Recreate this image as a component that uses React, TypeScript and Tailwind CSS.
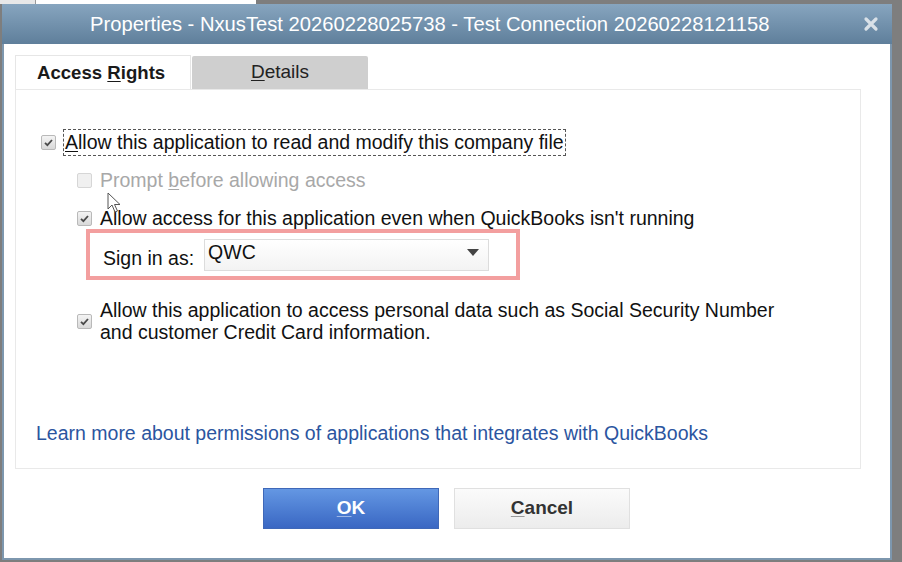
import React from "react";

const font = { fontFamily: '"Liberation Sans", Arial, sans-serif' };

function Check({ checked = true, disabled = false }: { checked?: boolean; disabled?: boolean }) {
  return (
    <span
      className={
        "inline-flex h-[15px] w-[15px] shrink-0 items-center justify-center rounded-[2px] border " +
        (disabled
          ? "border-[#d6d6d6] bg-[#f0f0f0]"
          : "border-[#b9b9b9] bg-gradient-to-b from-[#f4f4f4] to-[#d9d9d9]")
      }
    >
      {checked && (
        <svg width="11" height="11" viewBox="0 0 11 11">
          <path d="M2 5.8 L4.4 8.2 L9 3" fill="none" stroke="#4a4a4a" strokeWidth="1.8" />
        </svg>
      )}
    </span>
  );
}

export default function App() {
  return (
    <div style={font} className="relative h-[562px] w-[902px] overflow-hidden bg-[#7e7e7e]">
      {/* window behind the dialog */}
      <div className="flex h-[4px] w-[256px]">
        <div className="w-[35px] bg-[#e8e8e8]" />
        <div className="w-px bg-[#9a9a9a]" />
        <div className="flex-1 bg-white" />
      </div>

      <div className="ml-[2px] flex h-[556px] w-[890px] flex-col border-x-[2px] border-b-[2px] border-[#7d97ae] bg-white">
        {/* title bar */}
        <div className="-mx-[2px] flex h-[40px] shrink-0 items-center bg-gradient-to-b from-[#87a5bf] to-[#5f7f9b] pl-[88px] pr-[13px]">
          <span className="flex-1 text-[20.2px] text-white">
            Properties - NxusTest 20260228025738 - Test Connection 20260228121158
          </span>
          <svg width="16" height="16" viewBox="0 0 16 16">
            <path d="M3 3 L13 13 M13 3 L3 13" stroke="#d9e1e8" strokeWidth="3.2" strokeLinecap="round" />
          </svg>
        </div>

        <div className="flex flex-1 flex-col px-[11px]">
          {/* tabs */}
          <div className="mt-[11px] flex h-[34px] items-end">
            <div className="flex h-[34px] w-[176px] items-center border-x border-t border-[#e6e6e6] bg-white pl-[21px] text-[18.6px] font-bold text-[#1a1a1a]">
              Access&nbsp;<span className="underline decoration-1 underline-offset-2">R</span>ights
            </div>
            <div className="ml-[1px] flex h-[33px] w-[176px] items-center justify-center rounded-t-[2px] bg-[#cfcfcf] text-[19px] text-[#222]">
              <span className="underline decoration-1 underline-offset-2">D</span>etails
            </div>
          </div>

          {/* panel */}
          <div className="relative flex h-[380px] w-[846px] flex-col border border-[#e9e9e9] text-[19.5px] text-[#111]">
            <div className="mt-[39px] flex items-center pl-[25px]">
              <Check />
              <span className="ml-[7px] border border-dashed border-[#555] px-px leading-[25px]">
                <span className="underline decoration-1 underline-offset-2">A</span>llow this application to read and modify this company file
              </span>
            </div>

            <div className="mt-[11px] flex items-center pl-[61px] text-[#a8a8a8]">
              <Check checked={false} disabled />
              <span className="ml-[8px] leading-[26px]">
                Prompt <span className="underline decoration-1 underline-offset-2">b</span>efore allowing access
              </span>
            </div>

            <div className="mt-[12px] flex items-center pl-[61px]">
              <Check />
              <span className="ml-[8px] leading-[26px]">
                Allow access for this application even when QuickBooks isn't running
              </span>
            </div>

            <div className="-mt-[2px] ml-[70px] flex h-[51px] w-[434px] items-center border-[4px] border-[#f39f9f] bg-white pl-[13px]">
              <span className="mt-[8px]">Sign in as:</span>
              <div className="ml-[10px] flex h-[32px] w-[285px] items-center justify-between border border-[#dcdcdc] bg-gradient-to-b from-white to-[#f3f3f3] pl-[3px] pr-[9px]">
                <span className="-mt-[4px]">QWC</span>
                <svg width="12" height="7" viewBox="0 0 12 7" className="-mt-[4px]">
                  <path d="M0 0 H12 L6 7 Z" fill="#444" />
                </svg>
              </div>
            </div>

            <div className="mt-[19px] flex items-center pl-[61px]">
              <Check />
              <span className="ml-[8px] leading-[22px]">
                Allow this application to access personal data such as Social Security Number
                <br />
                and customer Credit Card information.
              </span>
            </div>

            <div className="mt-[76px] pl-[20px] text-[#2b55a0]">
              Learn more about permissions of applications that integrates with QuickBooks
            </div>

            {/* mouse pointer */}
            <svg width="14" height="22" viewBox="0 0 14 22" className="absolute left-[91px] top-[102px]">
              <path d="M1 1 L1 17 L5 13 L8 20 L10.5 19 L7.5 12.5 L13 12.5 Z" fill="white" stroke="#555" strokeWidth="1" />
            </svg>
          </div>

          {/* buttons */}
          <div className="mt-[19px] flex gap-[15px] pl-[248px]">
            <button className="flex h-[41px] w-[176px] items-center justify-center border border-[#3f68b8] bg-gradient-to-b from-[#6497e3] to-[#3a67c3] text-[19px] font-bold text-white">
              <span className="underline decoration-[#9fb8e6] decoration-1 underline-offset-2">O</span>K
            </button>
            <button className="flex h-[41px] w-[176px] items-center justify-center border border-[#e0e0e0] bg-gradient-to-b from-[#fbfbfb] to-[#ececec] text-[19px] font-bold text-[#333]">
              <span className="underline decoration-[#999] decoration-1 underline-offset-2">C</span>ancel
            </button>
          </div>
        </div>
      </div>
    </div>
  );
}
